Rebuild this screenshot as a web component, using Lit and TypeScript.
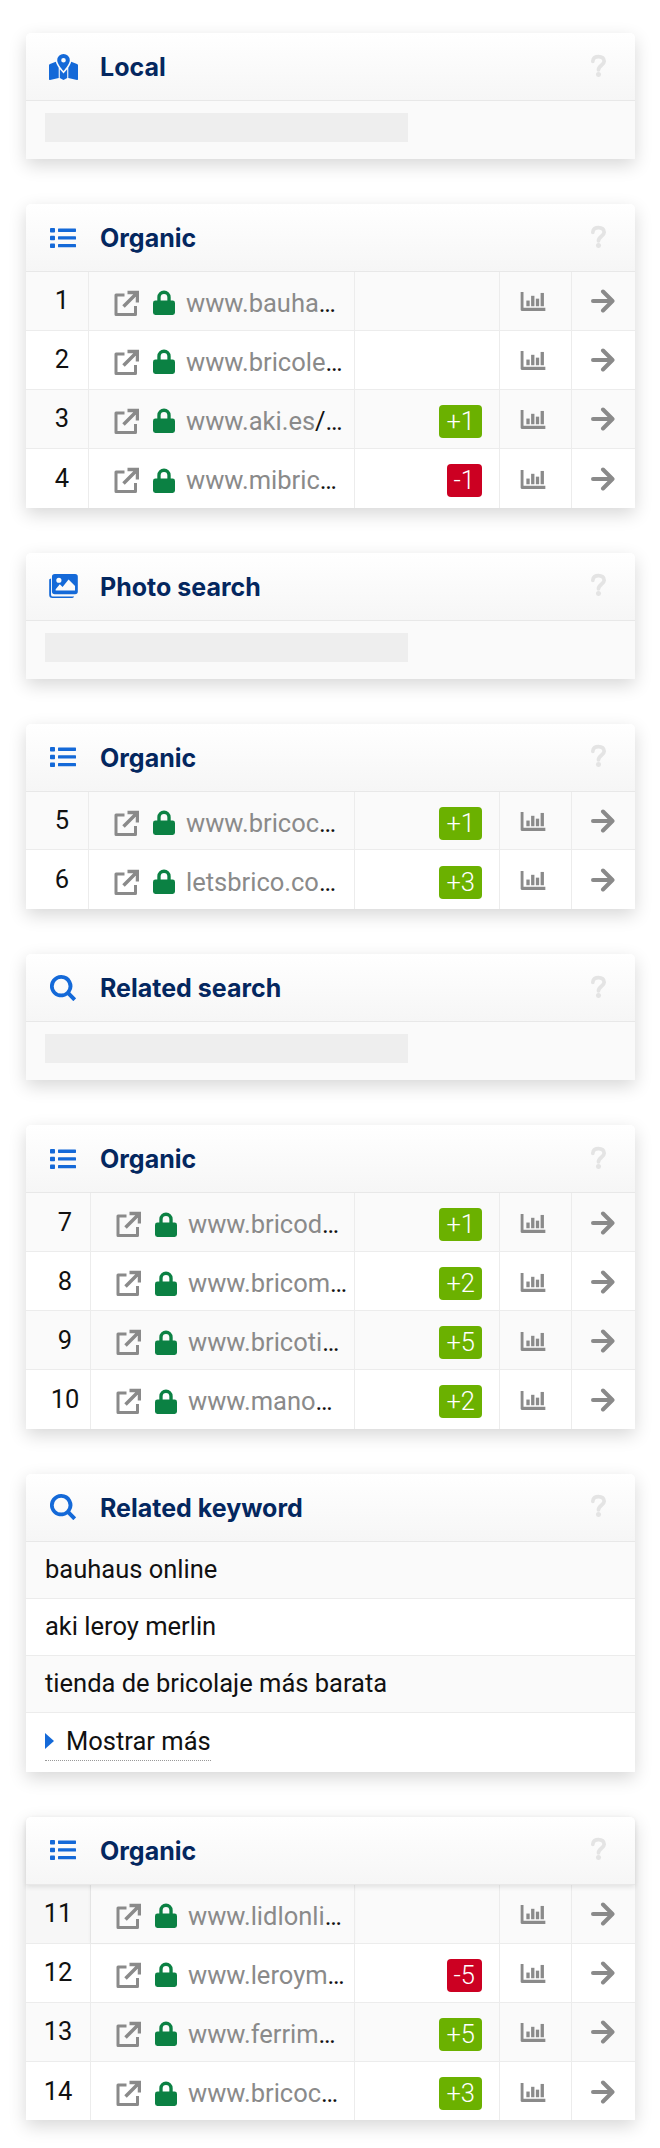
import { LitElement, html, css, svg } from "lit";
import { customElement } from "lit/decorators.js";

type Row = { n: number; host: string; path?: string; delta?: number };

const iconMap = svg`<path d="M14.500 0a6.300 6.300 0 0 0-6.300 6.300c0 2.800 3.800 8 6.300 10.800 2.500-2.800 6.300-8 6.300-10.800A6.300 6.300 0 0 0 14.500 0zm0 8.600a2.300 2.300 0 1 1 0-4.600 2.300 2.300 0 0 1 0 4.600z" fill-rule="evenodd"/><path d="M0 11.300c0-.6.400-1.100 1-1.300l5.800-2.200c.5 2 1.700 4.200 2.900 6V24L1 26c-.5.100-1-.2-1-.8z"/><path d="M10.800 15.300l3.700 4.200 3.700-4.200V24l-3.700 2-3.700-2z"/><path d="M19.300 13.800c1.200-1.800 2.400-4 2.900-6l5.800 2.200c.6.200 1 .7 1 1.300v13.900c0 .6-.5.900-1 .8l-8.700-2z"/>`;
const iconList = svg`<rect x="0" y="0" width="5" height="4.600" rx=".8"/><rect x="0" y="7.700" width="5" height="4.600" rx=".8"/><rect x="0" y="15.400" width="5" height="4.600" rx=".8"/><rect x="8" y=".6" width="18" height="3.300" rx=".6"/><rect x="8" y="8.300" width="18" height="3.300" rx=".6"/><rect x="8" y="16" width="18" height="3.300" rx=".6"/>`;
const iconPhoto = svg`<path d="M6 0h22a3 3 0 0 1 3 3v16a3 3 0 0 1-3 3H6a3 3 0 0 1-3-3V3a3 3 0 0 1 3-3zm4.500 4a2.800 2.800 0 1 0 0 5.600 2.800 2.800 0 0 0 0-5.600zM21 6l-6.500 8-3-2.800L7 16.500V18h21v-5z" fill-rule="evenodd"/><path d="M0 6.500v16A3.500 3.500 0 0 0 3.500 26H25c1 0 1.800-.6 2-1.500H4a2 2 0 0 1-2-2V5C1 5.200 0 5.600 0 6.500z"/>`;
const iconSearch = svg`<path d="M12 0a12 12 0 1 0 6.900 21.800l6.200 6.400 3-3-6.200-6.300A12 12 0 0 0 12 0zm0 4a8 8 0 1 1 0 16 8 8 0 0 1 0-16z" fill-rule="evenodd"/>`;

const ic = (w: number, h: number, vb: string, body: unknown) =>
  html`<svg class="hicon" width=${w} height=${h} viewBox=${vb} aria-hidden="true">${body}</svg>`;

@customElement("app-root")
export class AppRoot extends LitElement {
  static styles = css`
    :host { display: block; background: #fff; padding: 33px 25px 27px 26px; font-family: Roboto, "Liberation Sans", sans-serif; }
    .card { background: #fff; border-radius: 5px 5px 0 0; box-shadow: 0 6px 18px rgba(0,0,0,.16); margin-bottom: 45px; width: 609px; }
    .card:last-child { margin-bottom: 0; }
    .head { height: 68px; box-sizing: border-box; display: flex; align-items: center; padding: 0 28px 0 22px; border-bottom: 1px solid #e8e8e8;
      background: linear-gradient(#fff, #f6f6f6); border-radius: 5px 5px 0 0; position: relative; }
    .iconbox { width: 30px; display: flex; justify-content: center; color: #1469d8; margin-right: 22px; }
    .hicon { fill: currentColor; display: block; }
    .title { font: 700 25px Inter, Lato, sans-serif; color: #04275f; flex: 1; white-space: nowrap; padding-top: 1px; }
    .q { display: block; fill: none; stroke: #e4e4e4; stroke-width: 4; stroke-linecap: round; margin-bottom: 3px; }
    .q circle { fill: #e4e4e4; stroke: none; }
    .empty { background: #fafafa; height: 58px; box-sizing: border-box; padding: 12px 19px; }
    .bar { width: 363px; height: 29px; background: #eee; }
    .row { display: grid; grid-template-columns: 63px 266px 145px 71.500px 63.500px; height: 58.900px; box-sizing: border-box; border-bottom: 1px solid #ececec; background: #fff; }
    .row:last-child { border-bottom: 0; }
    .wide .row { grid-template-columns: 65px 264px 145px 71.500px 63.500px; }
    .row.alt { background: #fafafa; }
    .row > div { border-right: 1px solid #ececec; box-sizing: border-box; display: flex; align-items: center; min-width: 0; }
    .row > div:last-child { border-right: 0; }
    .num { justify-content: center; font-size: 25.500px; color: #111; padding: 0 0 1px 10px; }
    .mid .num { padding-left: 14px; }
    .first .num { padding-left: 0; }
    .url { padding: 4px 9px 0 25px; }
    .wide .url { padding-right: 5px; }
    .ext, .lock { flex: none; display: block; }
    .ext { fill: none; stroke: #8a8a8a; stroke-width: 3; margin-right: 14px; }
    .lock { fill: #0b8143; margin-right: 11px; }
    .text { flex: 1; min-width: 0; overflow: hidden; text-overflow: ellipsis; white-space: nowrap; font-size: 25.500px; color: #111; }
    .host { color: #8a8a8a; }
    .delta { justify-content: flex-end; padding: 5px 17px 0 0; }
    .badge { height: 33px; line-height: 33px; border-radius: 4px; color: #fff; font-size: 25.500px; padding: 0 7px; font-weight: 300; }
    .up { background: #6bb100; }
    .down { background: #cc0022; }
    .act { justify-content: center; padding-top: 1px; }
    .act.bars { padding: 2px 5px 0 0; }
    .chart { fill: #8a8a8a; display: block; }
    .arrow { fill: none; stroke: #8a8a8a; stroke-width: 4; stroke-linecap: round; stroke-linejoin: round; display: block; }
    .first .head { box-shadow: 0 2px 5px rgba(0,0,0,.10); }
    .first .row:first-child > .num { background: #f7f7f7; }
    .first .row:first-child > div:nth-child(2) { box-shadow: -1px 0 3px rgba(0,0,0,.05); background: #fafafa; }
    .kw { height: 57px; box-sizing: border-box; display: flex; align-items: center; padding: 0 19px 2px; font-size: 25.500px; color: #111; background: #fff; border-bottom: 1px solid #ececec; }
    .kw.alt { background: #fafafa; }
    .more { height: 59px; box-sizing: border-box; padding: 10px 19px 0; background: #fff; }
    .morein { display: inline-flex; align-items: center; gap: 12px; border-bottom: 1px dotted #999; font-size: 25.500px; color: #111; height: 38px; box-sizing: border-box; }
    .tri { width: 0; height: 0; border-left: 9px solid #1469d8; border-top: 8px solid transparent; border-bottom: 8px solid transparent; }
  `;

  private head(title: string, icon: unknown) {
    return html`<div class="head">
      <div class="iconbox">${icon}</div>
      <div class="title">${title}</div>
      <svg class="q" width="17" height="23" viewBox="0 0 18 24" aria-hidden="true">
        <path d="M3 7.500C3 4 6 2.500 9 2.500c3.500 0 6 2 6 5 0 4-6 4.500-6 9"/><circle cx="9" cy="21.500" r="2.700"/>
      </svg>
    </div>`;
  }

  private skeleton(title: string, icon: unknown) {
    return html`<section class="card">${this.head(title, icon)}<div class="empty"><div class="bar"></div></div></section>`;
  }

  private row(r: Row, i: number) {
    const cls = i % 2 === 0 ? "row alt" : "row";
    return html`<div class=${cls}>
      <div class="num">${r.n}</div>
      <div class="url">
        <svg class="ext" width="25" height="26" viewBox="0 0 25 26" aria-hidden="true">
          <path d="M10.500 5H2v19.500h19.500V16" stroke-linejoin="round"/><path d="M9.500 16.500 22.500 3.500M13.500 2.500H23.500V12.500" stroke-width="3.500"/>
        </svg>
        <svg class="lock" width="22" height="25" viewBox="0 0 23 26" aria-hidden="true">
          <path d="M4.500 11V7.500a7 7 0 0 1 14 0V11h2A2.500 2.500 0 0 1 23 13.500V23.500A2.500 2.500 0 0 1 20.500 26h-18A2.500 2.500 0 0 1 0 23.500V13.500A2.500 2.500 0 0 1 2.500 11zM8 11h7V7.500a3.500 3.500 0 0 0-7 0z" fill-rule="evenodd"/>
        </svg>
        <div class="text"><span class="host">${r.host}</span>${r.path ?? ""}</div>
      </div>
      <div class="delta">
        ${r.delta === undefined
          ? ""
          : html`<span class="badge ${r.delta > 0 ? "up" : "down"}">${r.delta > 0 ? "+" : ""}${r.delta}</span>`}
      </div>
      <div class="act bars">
        <svg class="chart" width="26" height="19" viewBox="0 0 26 20" aria-hidden="true">
          <path d="M0 0h3v16.500H26V20H1.200A1.200 1.200 0 0 1 0 18.800z"/><rect x="6" y="9" width="3.500" height="6"/><rect x="11" y="4" width="3.500" height="11"/><rect x="16" y="7" width="3.500" height="8"/><rect x="21" y="1" width="3.500" height="14"/>
        </svg>
      </div>
      <div class="act">
        <svg class="arrow" width="24" height="24" viewBox="0 0 24 24" aria-hidden="true">
          <path d="M2 12h19M12 2.500 21.500 12 12 21.500"/>
        </svg>
      </div>
    </div>`;
  }

  private organic(rows: Row[], cls = "") {
    return html`<section class="card ${cls}">
      ${this.head("Organic", ic(26, 20, "0 0 26 20", iconList))}
      <div>${rows.map((r, i) => this.row(r, i))}</div>
    </section>`;
  }

  render() {
    return html`
      ${this.skeleton("Local", ic(29, 26, "0 0 29 26", iconMap))}
      ${this.organic([
        { n: 1, host: "www.bauhaus.es", path: "/" },
        { n: 2, host: "www.bricoleroy.es", path: "/" },
        { n: 3, host: "www.aki.es", path: "/mi-tienda", delta: 1 },
        { n: 4, host: "www.mibricotienda.com", path: "/", delta: -1 },
      ])}
      ${this.skeleton("Photo search", ic(29, 24, "0 0 31 26", iconPhoto))}
      ${this.organic([
        { n: 5, host: "www.bricocentro.es", path: "/", delta: 1 },
        { n: 6, host: "letsbrico.com", path: "/tienda", delta: 3 },
      ])}
      ${this.skeleton("Related search", ic(26, 26, "0 0 28 28", iconSearch))}
      ${this.organic(
        [
          { n: 7, host: "www.bricodepot.es", path: "/", delta: 1 },
          { n: 8, host: "www.bricomart.es", path: "/", delta: 2 },
          { n: 9, host: "www.bricotienda.com", path: "/", delta: 5 },
          { n: 10, host: "www.manomano.es", path: "/", delta: 2 },
        ],
        "wide mid"
      )}
      <section class="card">
        ${this.head("Related keyword", ic(26, 26, "0 0 28 28", iconSearch))}
        <div class="kw alt">bauhaus online</div>
        <div class="kw">aki leroy merlin</div>
        <div class="kw alt">tienda de bricolaje más barata</div>
        <div class="more"><span class="morein"><span class="tri"></span>Mostrar más</span></div>
      </section>
      ${this.organic(
        [
          { n: 11, host: "www.lidlonline.es", path: "/" },
          { n: 12, host: "www.leroymerlin.es", path: "/", delta: -5 },
          { n: 13, host: "www.ferrimax.com", path: "/", delta: 5 },
          { n: 14, host: "www.bricocentro.es", path: "/", delta: 3 },
        ],
        "wide first"
      )}
    `;
  }
}
